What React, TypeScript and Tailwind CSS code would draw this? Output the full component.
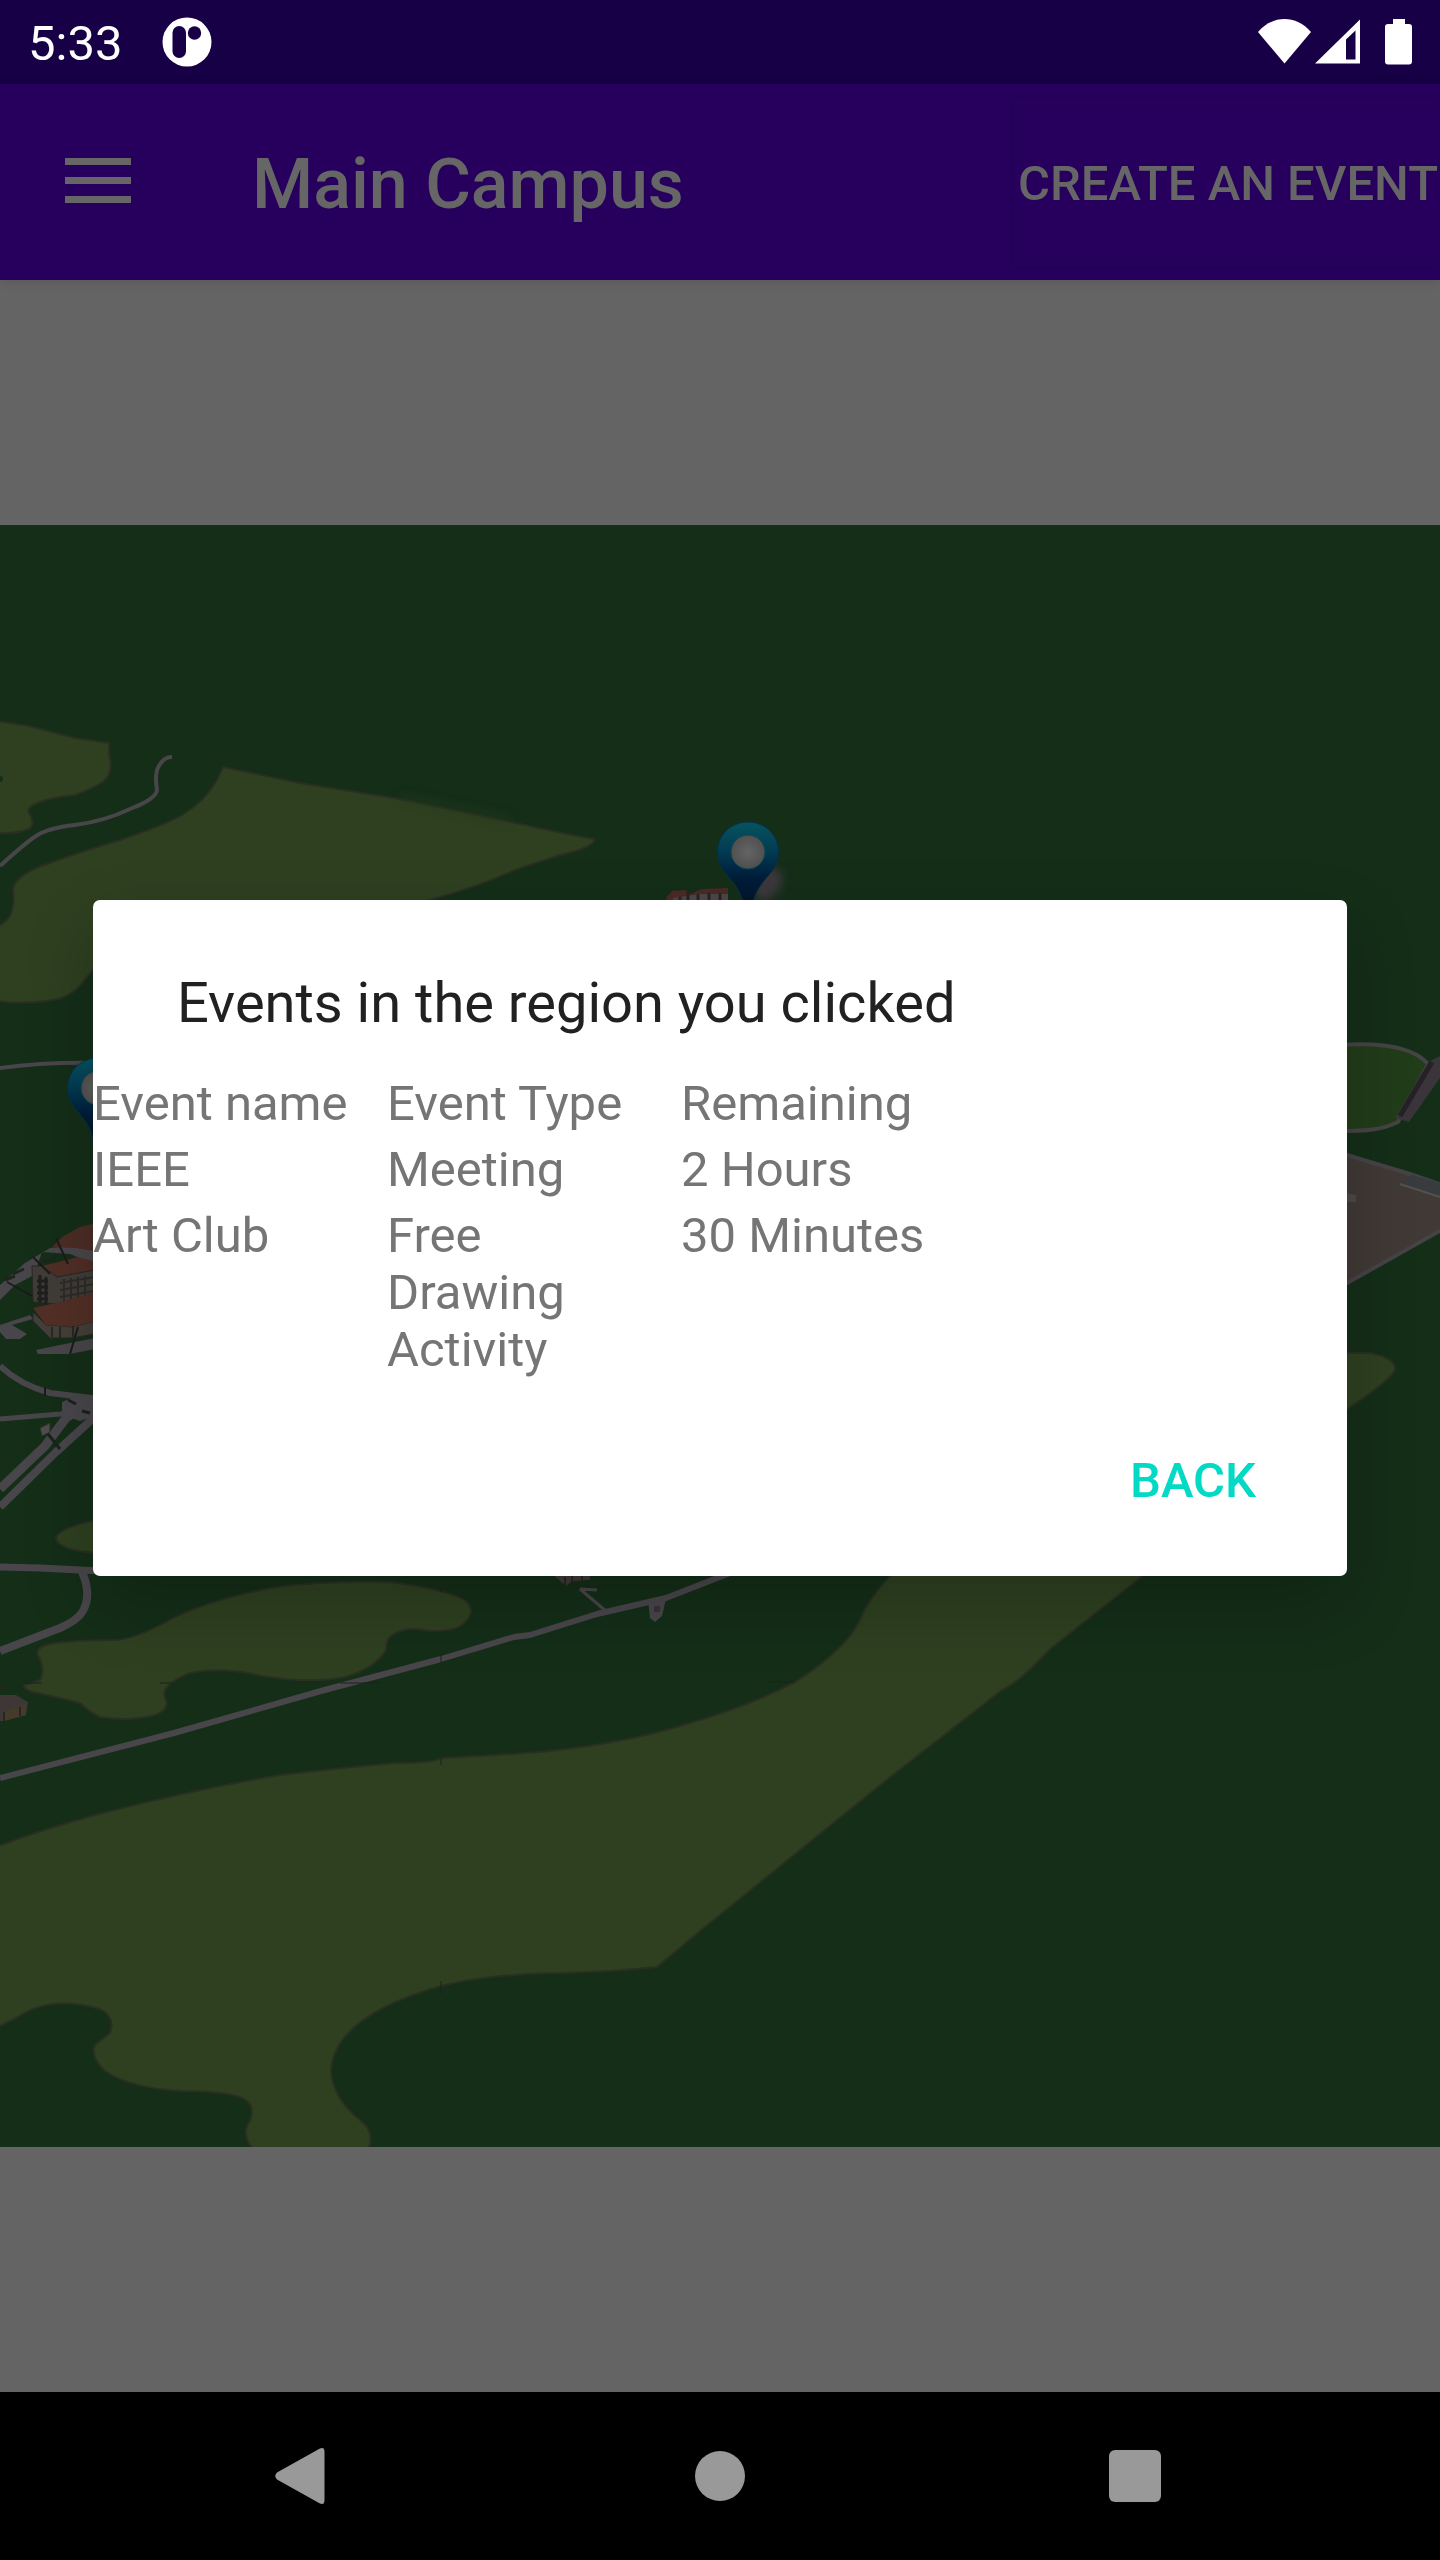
const events = [
  { name: 'IEEE', type: 'Meeting', remaining: '2 Hours' },
  { name: 'Art Club', type: 'Free Drawing Activity', remaining: '30 Minutes' },
];

function StatusBar() {
  return (
    <header className="flex h-[84px] items-center bg-[#170045] pl-7 pr-7 text-white">
      <time className="pt-[2px] text-[49px] leading-[57px]">5:33</time>
      <svg className="ml-10 h-[50px] w-[50px]" viewBox="0 0 50 50" aria-hidden="true">
        <circle cx="25" cy="25" r="24.5" fill="#fff" />
        <rect x="10.500" y="9" width="13.500" height="32" rx="6.700" fill="#170045" />
        <circle cx="32.500" cy="16" r="6.700" fill="#170045" />
      </svg>
      <svg className="ml-auto h-[54px] w-[156px]" viewBox="1256 15 156 54" aria-hidden="true">
        <path d="M1258 32C1273 14.700 1296 14.700 1311 32L1284.500 63.500Z" fill="#fff" />
        <path fillRule="evenodd" d="M1315 63.500L1360 19.500V63.500ZM1346 39.500V59.500H1355.500V30.500Z" fill="#fff" />
        <path d="M1393 19H1405V24H1409Q1412 24 1412 27V61.500Q1412 64.500 1409 64.500H1388Q1385 64.500 1385 61.500V27Q1385 24 1388 24H1393Z" fill="#fff" />
      </svg>
    </header>
  );
}

function AppBar() {
  return (
    <div className="relative flex h-[196px] items-center bg-[#27005e] text-[#666666] shadow-[0_2px_10px_rgba(0,0,0,0.12)]">
      <button type="button" aria-label="Open menu" className="flex h-[196px] w-[196px] items-center justify-center">
        <svg className="h-[66px] w-[66px]" viewBox="0 0 66 66" aria-hidden="true">
          <path d="M0 9H66V16H0ZM0 28H66V35H0ZM0 47H66V54H0Z" fill="#666666" />
        </svg>
      </button>
      <h1 className="ml-14 pt-1 text-[70px] font-medium leading-[82px]">Main Campus</h1>
      <button type="button" className="ml-auto h-[168px] whitespace-nowrap pl-1 pr-[2px] pt-[2px] text-[49px] font-medium leading-[57px] shadow-[0_0_8px_rgba(0,0,0,0.12)]">
        CREATE AN EVENT
      </button>
    </div>
  );
}

function Pin({ x, y }: { x: number; y: number }) {
  return (
    <g transform={`translate(${x} ${y})`}>
      <ellipse cx="20" cy="32" rx="12" ry="18" transform="rotate(35 20 32)" fill="#3a383b" filter="url(#soft)" />
      <path d="M0 -30C17 -30 30.500 -17 30.500 0C30.500 22 12 24 5 50L0 66L-5 50C-12 24 -30.500 22 -30.500 0C-30.500 -17 -17 -30 0 -30Z" fill="url(#pin)" stroke="#063049" strokeWidth="1" />
      <circle r="17" fill="url(#hole)" stroke="#0b4650" strokeWidth="1" />
    </g>
  );
}

function CampusMap() {
  return (
    <svg className="block h-auto w-full" viewBox="0 525 1440 1622" role="img" aria-label="Campus map">
      <defs>
        <linearGradient id="pin" x1="0" y1="0" x2="0" y2="1">
          <stop offset="0" stopColor="#07535f" />
          <stop offset="0.300" stopColor="#023c54" />
          <stop offset="0.600" stopColor="#001c39" />
          <stop offset="1" stopColor="#00101f" />
        </linearGradient>
        <radialGradient id="hole">
          <stop offset="0" stopColor="#646464" />
          <stop offset="1" stopColor="#505050" />
        </radialGradient>
        <filter id="soft" x="-50%" y="-50%" width="200%" height="200%">
          <feGaussianBlur stdDeviation="4" />
        </filter>
      </defs>
      <rect y="525" width="1440" height="1622" fill="#142e18" />

      <g fill="#2e4020" stroke="#2b2f22" strokeWidth="2" strokeLinejoin="round">
        <path d="M-4 721L29 726L75 738L109 743L109 755Q114 772 104 781Q95 788 75 795Q50 798 40 802Q26 807 29 813Q36 824 29 829Q18 834 -4 833Z" />
        <path d="M223 767Q212 797 182 815Q165 825 120 840Q80 852 50 863Q16 874 13 889Q15 905 10 916Q5 923 -4 928V1001Q30 1005 58 999Q76 994 86 978L120 940L430 900Q480 886 515 870L560 855Q596 847 594 839Q560 833 530 826L400 799L300 783Z" />
        <path d="M40 1659Q30 1647 55 1643Q75 1640 118 1640Q140 1637 175 1617Q210 1600 270 1588Q330 1580 390 1582Q450 1590 466 1601Q476 1611 466 1621Q458 1632 430 1631Q405 1625 391 1636Q386 1640 386 1650Q376 1668 345 1677Q310 1684 262 1676Q225 1667 190 1673Q160 1685 165 1698Q171 1709 155 1715Q130 1722 100 1717Q88 1711 80 1703Q60 1698 38 1693Q24 1691 24 1685L40 1680Q45 1671 40 1659Z" />
        <path d="M-4 1847Q40 1830 95 1815Q190 1790 280 1775Q340 1768 395 1763Q435 1763 441 1758Q500 1755 540 1752Q620 1744 680 1726Q750 1706 795 1682Q845 1650 860 1620Q868 1598 896 1570H1150L1049 1650Q1020 1682 1002 1690L889 1778L700 1931L657 1967Q610 1972 560 1973Q490 1974 441 1986Q335 2016 331 2070Q332 2098 360 2120Q376 2132 368 2150H254Q240 2135 250 2121Q257 2104 240 2097Q220 2091 180 2091Q130 2088 105 2071Q90 2057 95 2045L110 2033Q116 2018 100 2009Q50 1995 18 2017L-4 2028Z" />
        <path d="M100 1519Q58 1528 56 1538Q58 1551 100 1553Z" />
        <path d="M1340 1353H1370Q1396 1358 1395 1370Q1390 1381 1340 1414Z" />
      </g>
      <circle cx="0" cy="779" r="3" fill="#142e18" />
      <path d="M400 797L510 820" stroke="#22381c" strokeWidth="9" opacity="0.500" filter="url(#soft)" />

      <g fill="none" stroke="#48464a" strokeLinejoin="round">
        <path d="M172 757Q162 757 157 770Q155 778 157 790Q156 799 130 809Q105 821 75 825Q48 828 36 836Q24 844 0 866" strokeWidth="4" />
        <path d="M0 1068Q45 1062 96 1063" strokeWidth="4" />
        <path d="M0 1366Q20 1385 50 1393L100 1399" strokeWidth="6" />
        <path d="M0 1419L60 1414L100 1408" strokeWidth="5" />
        <path d="M0 1489L45 1446L66 1418L100 1396" strokeWidth="9" />
        <path d="M0 1507L55 1453L100 1412" strokeWidth="8" />
        <path d="M0 1567L40 1568L100 1571" strokeWidth="7" />
        <path d="M82 1572Q92 1594 83 1611Q78 1620 60 1628L0 1651" strokeWidth="8" />
        <path d="M0 1778L174 1733L321 1691L441 1659L514 1637L530 1635L597 1614L666 1598L730 1573" strokeWidth="6" />
        <path d="M580 1589L607 1612M580 1589L597 1590" strokeWidth="3" />
      </g>
      <path d="M62 1402L78 1395L100 1398V1414L80 1421L62 1415Z" fill="#48464a" />
      <path d="M68 1400L76 1404M82 1411L90 1413M48 1434L60 1449" stroke="#1b221c" strokeWidth="3" />
      <path d="M648 1600L666 1599L662 1616L655 1622L650 1618Z" fill="#48464a" />
      <path d="M654 1606H660V1612H654Z" fill="#38333a" />
      <path d="M441 1592V1586M441 1654V1663M441 1758V1765M441 1981V1994M24 1683H42M160 1683H172M340 1683H380M770 1682H795" stroke="#18251a" strokeWidth="1" />

      <g>
        <path d="M0 1285L25 1263L50 1248L70 1246L100 1250V1266L70 1254L42 1252L34 1275L15 1285L0 1300Z" fill="#48464a" />
        <path d="M5 1280L15 1276M13 1274L24 1269M42 1262L58 1257" stroke="#1e241e" strokeWidth="3" />
        <path d="M52 1247L62 1237L80 1227L100 1222V1252L75 1248Z" fill="#4b2d25" />
        <path d="M42 1266L78 1257L100 1263V1271L57 1277Z" fill="#502e26" />
        <path d="M32 1266L42 1266L57 1277L100 1269V1297L58 1304L33 1302Z" fill="#403c37" stroke="#292724" strokeWidth="1" />
        <path d="M40 1275V1303M46 1277V1305M37 1281H48M37 1287H48M37 1293H48M37 1299H48" stroke="#201f1f" strokeWidth="3" />
        <path d="M60 1283L94 1277M60 1290L94 1284M60 1297L94 1291M64 1279V1302M71 1278V1301M78 1277V1300M85 1276V1298" stroke="#2d2b2a" strokeWidth="2" />
        <path d="M33 1312L46 1325L72 1327L100 1320V1333L72 1338L50 1338L33 1321Z" fill="#433f39" stroke="#292724" strokeWidth="1" />
        <path d="M33 1308L60 1302L100 1291V1320L72 1327L46 1325Z" fill="#522f26" />
        <path d="M52 1327V1337M60 1327V1338M73 1326V1337" stroke="#292724" strokeWidth="2" />
        <path d="M0 1325L30 1315L33 1319L12 1325L27 1334L20 1339H6L0 1332Z" fill="#48464a" />
        <path d="M36 1350L60 1345L100 1337V1348L70 1354H38Z" fill="#48464a" />
        <path d="M56 1238L68 1264M33 1257L50 1274M7 1282L32 1296M78 1327L70 1354M45 1387V1396" stroke="#1b1b1c" strokeWidth="2" />
        <path d="M40 1428L50 1423V1432L42 1436Z" fill="#4f4d4d" stroke="#2f302e" strokeWidth="1" />
        <path d="M0 1695L16 1695L28 1702L26 1715L4 1721H0Z" fill="#3d3735" />
        <path d="M4 1712L26 1704V1715L4 1721Z" fill="#463a28" />
        <path d="M4 1712V1721M20 1707V1716M0 1690L6 1686" stroke="#292522" strokeWidth="2" />
        <path d="M552 1574L566 1586L572 1581L590 1580V1570H552Z" fill="#3f3937" />
        <path d="M572 1574V1582M582 1574V1581M565 1577V1586" stroke="#292522" strokeWidth="2" />
      </g>

      <g>
        <path d="M666 898L672 891L686 890L690 894L702 889L728 888V905H670Z" fill="#4b2a24" />
        <path d="M673 898L700 894H728V905H673Z" fill="#4c4648" />
        <path d="M680 897V904M688 890V904M698 894V904M709 893V904M720 893V904" stroke="#282426" strokeWidth="3" />
      </g>

      <g>
        <path d="M1340 1045C1385 1042 1415 1049 1428 1064L1398 1122C1382 1130 1365 1131 1340 1131Z" fill="#213c19" stroke="#454346" strokeWidth="4" />
        <path d="M1428 1062L1440 1056V1078L1409 1122L1395 1118Z" fill="#39353a" />
        <path d="M1432 1062L1400 1116" stroke="#262126" strokeWidth="5" />
        <path d="M1340 1153L1410 1174L1445 1190V1228L1340 1289Z" fill="#403936" />
        <path d="M1340 1153L1410 1174L1445 1186M1445 1228L1340 1287" fill="none" stroke="#454346" strokeWidth="4" />
        <path d="M1400 1184L1412 1175L1440 1183V1197Z" fill="#393c3e" />
        <path d="M1400 1184L1440 1197" stroke="#525250" strokeWidth="2" />
        <path d="M1340 1192L1356 1195V1202H1340Z" fill="#4c4a47" />
      </g>

      <Pin x={748} y={852} />
      <Pin x={98} y={1088} />
    </svg>
  );
}

function EventsDialog() {
  return (
    <section
      role="dialog"
      aria-labelledby="events-title"
      className="w-full rounded-[7px] bg-white pb-3 pt-[70px] shadow-[0_28px_70px_rgba(0,0,0,0.2)]"
    >
      <h2 id="events-title" className="px-[84px] text-[56px] leading-[66px] text-[#212121]">
        Events in the region you clicked
      </h2>
      <table className="mt-[30px] w-[882px] table-fixed text-left text-[49px] leading-[57px] text-[#757575]">
        <thead>
          <tr>
            <th className="pt-[9px] font-normal">Event name</th>
            <th className="pt-[9px] font-normal">Event Type</th>
            <th className="pt-[9px] font-normal">Remaining</th>
          </tr>
        </thead>
        <tbody>
          {events.map((event) => (
            <tr key={event.name} className="align-top">
              <td className="pt-[9px]">{event.name}</td>
              <td className="pr-10 pt-[9px]">{event.type}</td>
              <td className="pt-[9px]">{event.remaining}</td>
            </tr>
          ))}
        </tbody>
      </table>
      <div className="mt-[18px] flex justify-end pr-[63px]">
        <button type="button" className="h-[168px] px-7 text-[49px] font-medium leading-[57px] text-[#03dac5]">
          BACK
        </button>
      </div>
    </section>
  );
}

function NavigationBar() {
  return (
    <nav className="flex h-[168px] items-center justify-center gap-[140px] bg-black text-[#999999]">
      <button type="button" aria-label="Back" className="flex h-full w-[280px] items-center justify-center">
        <svg className="h-[58px] w-[50px]" viewBox="0 0 50 58" fill="currentColor" aria-hidden="true">
          <path d="M2 25.500L44 2Q49.500 -1 49.500 5V53Q49.500 59 44 56L2 32.500Q-1.500 29 2 25.500Z" />
        </svg>
      </button>
      <button type="button" aria-label="Home" className="flex h-full w-[280px] items-center justify-center">
        <span className="h-[50px] w-[50px] rounded-full bg-[#999999]" />
      </button>
      <button type="button" aria-label="Recent apps" className="flex h-full w-[280px] items-center justify-center pr-[10px]">
        <span className="h-[52px] w-[52px] rounded-[6px] bg-[#999999]" />
      </button>
    </nav>
  );
}

export default function App() {
  return (
    <div className="flex min-h-screen flex-col bg-[#646464] font-[Roboto,sans-serif]">
      <StatusBar />
      <div className="relative flex flex-1 flex-col">
        <AppBar />
        <main className="flex flex-1 items-center">
          <CampusMap />
        </main>
        <div className="absolute inset-0 flex items-center px-[93px]">
          <EventsDialog />
        </div>
      </div>
      <NavigationBar />
    </div>
  );
}
